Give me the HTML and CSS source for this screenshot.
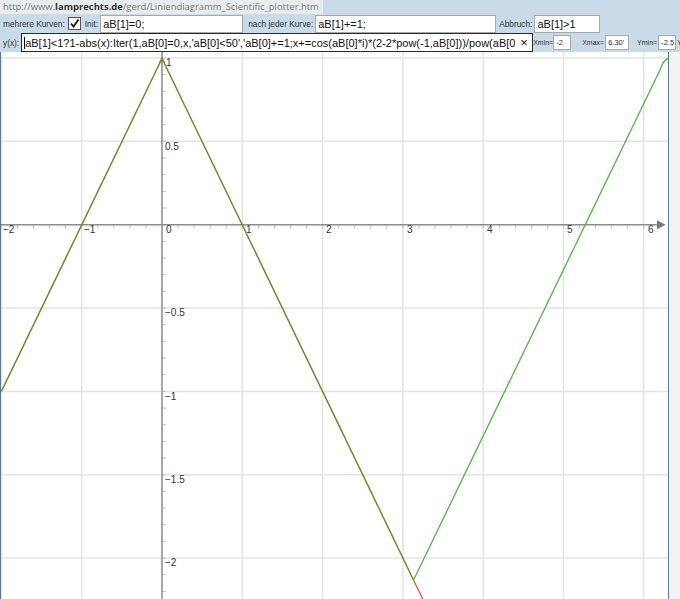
FILE: index.html
```html
<!DOCTYPE html>
<html>
<head>
<meta charset="utf-8">
<link rel="stylesheet" href="styles.css">
</head>
<body>
<header class="top">
  <div class="row url-row"><span class="url">http://www.<b>lamprechts.de</b>/gerd/Liniendiagramm_Scientific_plotter.htm</span></div>
  <div class="row row2">
    <span class="lbl">mehrere Kurven:</span>
    <span class="check"><svg width="11" height="11" viewBox="0 0 11 11"><path d="M2 5.5 L4.5 8.5 L9.5 1.5" fill="none" stroke="#111" stroke-width="1.8"/></svg></span>
    <span class="lbl l-init">Init:</span>
    <span class="field f-init">aB[1]=0;</span>
    <span class="lbl l-nach">nach jeder Kurve:</span>
    <span class="field f-nach">aB[1]+=1;</span>
    <span class="lbl l-abb">Abbruch:</span>
    <span class="field f-abb">aB[1]&gt;1</span>
  </div>
  <div class="row row3">
    <span class="lbl">y(x):</span>
    <span class="field f-y"><span class="ytext"><span class="caret"></span>aB[1]&lt;1?1-abs(x):Iter(1,aB[0]=0,x,'aB[0]&lt;50','aB[0]+=1;x+=cos(aB[0]*i)*(2-2*pow(-1,aB[0]))/pow(aB[0],2)/(PI*PI/4)',x)</span><span class="clear">×</span></span>
    <span class="lbl l-x l-xmin">Xmin=</span><span class="mini m-xmin">-2</span>
    <span class="lbl l-x l-xmax">Xmax=</span><span class="mini m-xmax">6.30'</span>
    <span class="lbl l-x l-ymin">Ymin=</span><span class="mini m-ymin">-2.5</span>
    <span class="lbl l-x l-y">Y</span>
  </div>
</header>
<main class="plot">
  <div class="canvas">
    <svg width="667" height="547" viewBox="1 52 667 547">
      <g stroke="#e4e4e4" stroke-width="1.5">
        <path d="M1.4 52V599M81.7 52V599M242.3 52V599M322.6 52V599M402.9 52V599M483.2 52V599M563.5 52V599M643.8 52V599"/>
        <path d="M0 58H668M0 141.35H668M0 308H668M0 391.4H668M0 474.75H668M0 558.1H668"/>
      </g>
      <g stroke="#c2c2c2" stroke-width="1">
        <path d="M17.5 224.7v4M33.5 224.7v4M49.6 224.7v4M65.6 224.7v4M97.8 224.7v4M113.8 224.7v4M129.9 224.7v4M145.9 224.7v4M178.1 224.7v4M194.1 224.7v4M210.2 224.7v4M226.2 224.7v4M258.4 224.7v4M274.4 224.7v4M290.5 224.7v4M306.5 224.7v4M338.7 224.7v4M354.7 224.7v4M370.8 224.7v4M386.8 224.7v4M419 224.7v4M435 224.7v4M451.1 224.7v4M467.1 224.7v4M499.3 224.7v4M515.3 224.7v4M531.4 224.7v4M547.4 224.7v4M579.6 224.7v4M595.6 224.7v4M611.7 224.7v4M627.7 224.7v4M81.7 224.7v4M242.3 224.7v4M402.9 224.7v4M563.5 224.7v4M1.4 224.7v4M322.6 224.7v4M483.2 224.7v4M643.8 224.7v4"/>
        <path d="M162 58h4M162 74.7h4M162 91.3h4M162 108h4M162 124.7h4M162 141.4h4M162 158h4M162 174.7h4M162 191.4h4M162 208h4M162 241.4h4M162 258h4M162 274.7h4M162 291.4h4M162 308h4M162 324.7h4M162 341.4h4M162 358.1h4M162 374.7h4M162 391.4h4M162 408.1h4M162 424.7h4M162 441.4h4M162 458.1h4M162 474.8h4M162 491.4h4M162 508.1h4M162 524.8h4M162 541.4h4M162 558.1h4M162 574.8h4M162 591.4h4"/>
      </g>
      <g stroke="#8c8c8c" stroke-width="1.5">
        <path d="M0 224.7H658M162 52V599"/>
      </g>
      <polygon points="657,220.2 665.5,224.7 657,229.2" fill="#7a7a7a"/>
      <g class="ticklbl">
        <text x="3" y="233">−2</text>
        <text x="84" y="233">−1</text>
        <text x="166" y="233">0</text>
        <text x="246" y="233">1</text>
        <text x="326" y="233">2</text>
        <text x="407" y="233">3</text>
        <text x="487" y="233">4</text>
        <text x="567" y="233">5</text>
        <text x="648" y="233">6</text>
        <text x="166" y="66">1</text>
        <text x="165" y="150">0.5</text>
        <text x="165" y="316">−0.5</text>
        <text x="165" y="400">−1</text>
        <text x="165" y="483">−1.5</text>
        <text x="165" y="566">−2</text>
      </g>
      <path d="M413.5 580L433 620" stroke="#ee4f4f" stroke-width="1.3" fill="none"/>
      <path d="M159.5 63L162 58L164.5 63" stroke="#e05050" stroke-width="1.4" fill="none"/>
      <path d="M413.5 580Q415 577 416.5 574L660 70Q663.5 60 668 58.5" stroke="#5ab84c" stroke-width="1.4" fill="none"/>
      <path d="M1.4 391.4L161 60.5Q162 59 163 60.5L413.5 580" stroke="#6c8a2c" stroke-width="1.5" fill="none"/>
    </svg>
  </div>
</main>
</body>
</html>
```

FILE: styles.css
```css
html, body {
  margin: 0;
  padding: 0;
}
body {
  width: 680px;
  height: 599px;
  overflow: hidden;
  background: #f2f3f4;
  font-family: "Liberation Sans", Arial, sans-serif;
  color: #222;
}
.top {
  background: #c9dbe9;
  height: 52px;
  width: 680px;
  overflow: hidden;
}
.row {
  display: flex;
  align-items: center;
  white-space: nowrap;
}
.url-row {
  height: 14px;
}
.url {
  background: #e8ecef;
  color: #7b7b7b;
  font-family: "Open Sans", "Liberation Sans", sans-serif;
  font-size: 9.45px;
  line-height: 14px;
  height: 14px;
  padding: 0 4px 0 3px;
}
.url b {
  color: #333;
  font-weight: 700;
}
.row2 {
  height: 19px;
  padding-left: 3px;
}
.row3 {
  height: 19px;
  padding-left: 3px;
}
.lbl {
  font-size: 8.3px;
  color: #333;
}
.check {
  display: inline-flex;
  align-items: center;
  justify-content: center;
  width: 11px;
  height: 11px;
  border: 1px solid #555;
  background: #fff;
  margin-left: 3px;
}
.l-init { margin-left: 4px; }
.l-nach { margin-left: 5px; }
.l-abb { margin-left: 3px; }
.field {
  box-sizing: border-box;
  display: inline-flex;
  align-items: center;
  height: 18px;
  background: #fff;
  border: 1px solid #a9a9a9;
  font-size: 11px;
  color: #111;
  padding-left: 2px;
  margin-left: 2px;
}
.f-init { width: 143px; }
.f-nach { width: 181px; }
.f-abb { width: 66px; }
.f-y {
  width: 512px;
  height: 19px;
  border-color: #2a2a2a;
  margin-left: 2px;
  padding-right: 2px;
}
.ytext {
  flex: 1;
  overflow: hidden;
  white-space: nowrap;
  font-size: 11px;
}
.caret {
  display: inline-block;
  width: 1px;
  height: 12px;
  background: #000;
  vertical-align: -2px;
}
.clear {
  font-size: 13px;
  width: 12px;
  text-align: center;
  color: #222;
  margin-left: 3px;
}
.l-x {
  font-size: 7px;
  text-align: right;
  flex: none;
  padding-right: 1px;
}
.l-xmin { width: 19px; }
.l-xmax { width: 33px; }
.l-ymin { width: 28px; }
.l-y { width: auto; text-align: left; padding-left: 1px; }
.mini {
  box-sizing: border-box;
  display: inline-flex;
  align-items: center;
  height: 15px;
  background: #fff;
  border: 1px solid #a9a9a9;
  font-size: 7.5px;
  padding-left: 2px;
  color: #333;
  overflow: hidden;
  flex: none;
}
.m-xmin { width: 18px; }
.m-xmax { width: 24px; }
.m-ymin { width: 18px; }
.plot {
  display: flex;
}
.canvas {
  width: 667px;
  height: 547px;
  background: #fff;
  border-left: 1px solid #4a7db2;
  border-right: 1px solid #4a7db2;
  overflow: hidden;
}
.canvas svg {
  display: block;
}
.ticklbl text {
  font-family: "Liberation Sans", Arial, sans-serif;
  font-size: 10px;
  fill: #333;
}
```
